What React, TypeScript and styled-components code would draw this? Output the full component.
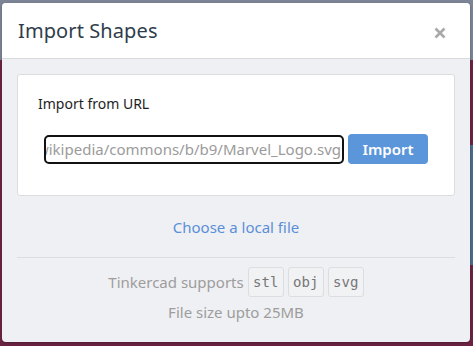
import React from "react";
import styled, { createGlobalStyle } from "styled-components";

const Global = createGlobalStyle`
  html, body { margin: 0; padding: 0; }
  body {
    width: 473px;
    height: 346px;
    overflow: hidden;
    font-family: "Noto Sans", "Open Sans", sans-serif;
    background:
      linear-gradient(to bottom, #7c8596 0px, #7c8596 60px, transparent 60px),
      linear-gradient(to right, #6d2444 0px, #6d2444 4px, transparent 4px),
      linear-gradient(to bottom, transparent 145px, #4d6d8c 145px, #4d6d8c 265px, transparent 265px),
      #6d2444;
  }
`;

const Backdrop = styled.div`
  padding: 3px 3px 4px 2px;
  box-sizing: border-box;
  width: 473px;
  height: 346px;
`;

const Modal = styled.div`
  background: #eff0f3;
  border-radius: 4px;
  overflow: hidden;
  height: 100%;
  display: flex;
  flex-direction: column;
  box-shadow: 0 1px 3px rgba(0, 0, 0, 0.3);
`;

const Header = styled.div`
  background: #fff;
  height: 55px;
  border-bottom: 1px solid #d9dadd;
  display: flex;
  align-items: center;
  justify-content: space-between;
  padding: 0 23px 0 16px;
  flex-shrink: 0;
`;

const Title = styled.h1`
  margin: 0;
  font-size: 20px;
  font-weight: 400;
  color: #2f3d4c;
  letter-spacing: 0.1px;
`;

const Close = styled.button`
  border: none;
  background: none;
  padding: 0;
  margin-top: 4px;
  width: 14px;
  height: 14px;
  display: flex;
  align-items: center;
  justify-content: center;
  cursor: pointer;
`;

const Body = styled.div`
  padding: 15px 15px 0 15px;
  display: flex;
  flex-direction: column;
`;

const Card = styled.div`
  background: #fff;
  border: 1px solid #dcdde0;
  border-radius: 3px;
  height: 122px;
  box-sizing: border-box;
  padding: 20px 26px 0 20px;
`;

const Label = styled.div`
  font-size: 14px;
  color: #1e1e1e;
  line-height: 18px;
`;

const Row = styled.div`
  margin-top: 21px;
  margin-left: 6px;
  display: flex;
  align-items: center;
  gap: 4px;
`;

const UrlBox = styled.div`
  width: 300px;
  height: 29px;
  box-sizing: border-box;
  border: 2px solid #111;
  border-radius: 5px;
  display: flex;
  align-items: center;
  justify-content: flex-end;
  overflow: hidden;
  padding-right: 1px;
`;

const UrlText = styled.span`
  white-space: nowrap;
  font-size: 15px;
  color: #9b9b9b;
  flex-shrink: 0;
`;

const ImportButton = styled.button`
  width: 80px;
  height: 30px;
  background: #5b95da;
  border: none;
  border-radius: 4px;
  color: #fff;
  font-family: inherit;
  font-size: 15px;
  font-weight: 600;
  padding: 0;
`;

const LocalLink = styled.a`
  display: block;
  text-align: center;
  color: #5a8fd9;
  font-size: 15px;
  margin-top: 21px;
  line-height: 20px;
  text-decoration: none;
  cursor: pointer;
`;

const Divider = styled.hr`
  border: none;
  border-top: 1px solid #dcdde0;
  margin: 20px 0 0 0;
`;

const Footer = styled.div`
  display: flex;
  flex-direction: column;
  align-items: center;
  padding-top: 9px;
  gap: 4px;
`;

const Supports = styled.div`
  display: flex;
  align-items: center;
  gap: 4px;
  color: #9d9d9d;
  font-size: 15px;
`;

const Chip = styled.code`
  width: 36px;
  height: 30px;
  box-sizing: border-box;
  display: flex;
  align-items: center;
  justify-content: center;
  border: 1px solid #dcdde0;
  border-radius: 3px;
  background: #f1f2f4;
  font-family: "DejaVu Sans Mono", "Liberation Mono", monospace;
  font-size: 14px;
  color: #777;
`;

const SizeNote = styled.div`
  color: #9d9d9d;
  font-size: 15px;
  line-height: 22px;
`;

export default function App() {
  return (
    <>
      <Global />
      <Backdrop>
        <Modal>
          <Header>
            <Title>Import Shapes</Title>
            <Close aria-label="Close">
              <svg width="12" height="12" viewBox="0 0 12 12">
                <path d="M1.5 1.5 L10.5 10.5 M10.5 1.5 L1.5 10.5" stroke="#a9a9a9" strokeWidth="2.6" strokeLinecap="butt" />
              </svg>
            </Close>
          </Header>
          <Body>
            <Card>
              <Label>Import from URL</Label>
              <Row>
                <UrlBox>
                  <UrlText>https://upload.wikimedia.org/wikipedia/commons/b/b9/Marvel_Logo.svg</UrlText>
                </UrlBox>
                <ImportButton>Import</ImportButton>
              </Row>
            </Card>
            <LocalLink>Choose a local file</LocalLink>
            <Divider />
            <Footer>
              <Supports>
                <span>Tinkercad supports</span>
                <Chip>stl</Chip>
                <Chip>obj</Chip>
                <Chip>svg</Chip>
              </Supports>
              <SizeNote>File size upto 25MB</SizeNote>
            </Footer>
          </Body>
        </Modal>
      </Backdrop>
    </>
  );
}
